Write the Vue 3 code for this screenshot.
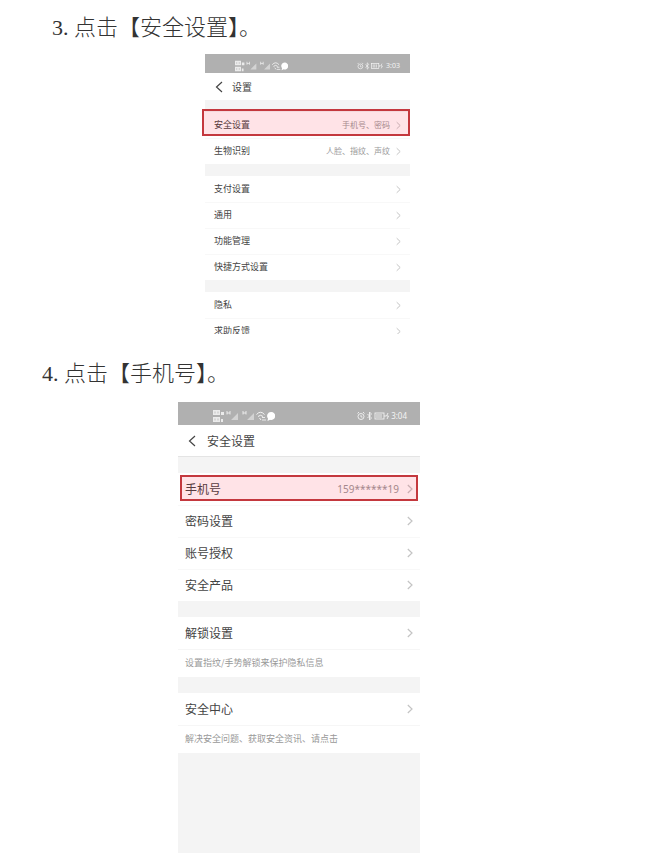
<script setup>
import { h } from 'vue'

const settings = [
  [
    { label: '安全设置', value: '手机号、密码', marked: true },
    { label: '生物识别', value: '人脸、指纹、声纹' },
  ],
  [{ label: '支付设置' }, { label: '通用' }, { label: '功能管理' }, { label: '快捷方式设置' }],
  [{ label: '隐私' }, { label: '求助反馈' }],
]

const security = [
  {
    rows: [
      { label: '手机号', value: '159******19', marked: true },
      { label: '密码设置' },
      { label: '账号授权' },
      { label: '安全产品' },
    ],
  },
  { rows: [{ label: '解锁设置' }], note: '设置指纹/手势解锁来保护隐私信息' },
  { rows: [{ label: '安全中心' }], note: '解决安全问题、获取安全资讯、请点击' },
]

const Chevron = () =>
  h('svg', { class: 'chevron', viewBox: '0 0 6 10', 'aria-hidden': 'true' }, [
    h('path', { d: 'M.8 1 5 5 .8 9', fill: 'none', stroke: 'currentColor', 'stroke-width': 1.2 }),
  ])

const BackIcon = () =>
  h('svg', { class: 'back-icon', viewBox: '0 0 8 12', 'aria-hidden': 'true' }, [
    h('path', { d: 'M7 1 1.5 6 7 11', fill: 'none', stroke: 'currentColor', 'stroke-width': 1.2 }),
  ])

const SignalIcons = () =>
  h('svg', { class: 'signals', viewBox: '0 0 62 14', 'aria-hidden': 'true' }, [
    h('g', { fill: '#fff', opacity: 0.75 }, [
      h('path', { d: 'M0 1h7v5H0zM0 8h7v5H0zM8 3h3v3H8zM8 10h2v3H8z' }),
      h('path', { d: 'M25 4v7h-7zM41 4v7h-7z', opacity: 0.6 }),
    ]),
    h('path', {
      d: 'M2 2.500v2M5 2.500v2M2 9.500v2M5 9.500v2',
      stroke: '#b0b0b0',
      'stroke-width': 0.7,
    }),
    h('path', {
      d: 'M14 2v3.500M17 2v3.500M14 4h3M30 2v3.500M33 2v3.500M30 4h3',
      stroke: '#fff',
      'stroke-width': 0.9,
      opacity: 0.8,
    }),
    h('path', {
      d: 'M43.500 5.500q4-4.500 8 0M45 7.500q2.500-2.500 5 0M46.500 9l1.500 2',
      fill: 'none',
      stroke: '#fff',
      'stroke-width': 1,
      opacity: 0.85,
    }),
    h('path', { d: 'M49 8.500h3M49 11h4', stroke: '#fff', 'stroke-width': 0.9, opacity: 0.85 }),
    h('path', { d: 'M58 3a4 4 0 1 1-1 7.800L54.500 12l.5-2.500A4 4 0 0 1 58 3z', fill: '#fff' }),
  ])

const DeviceIcons = () =>
  h('svg', { class: 'devices', viewBox: '0 0 32 10', 'aria-hidden': 'true' }, [
    h('g', { fill: 'none', stroke: '#fff', 'stroke-width': 0.9, opacity: 0.85 }, [
      h('circle', { cx: 4, cy: 5.5, r: 3 }),
      h('path', { d: 'M4 4v2h1.500M.5 2.500 2 1M7.500 2.500 6 1' }),
      h('path', { d: 'M10.500 3l4 4-2 2V1l2 2-4 4' }),
      h('rect', { x: 18, y: 2, width: 9, height: 6 }),
      h('path', { d: 'M20 3v4M22 3v4M24 3v4M28 4v2M31 2l-1.500 3h2L30 8' }),
    ]),
  ])
</script>

<template>
  <main class="page">
    <section class="step">
      <h2 class="step-title">3. 点击【安全设置】。</h2>
      <div class="phone phone-small">
        <div class="status">
          <SignalIcons />
          <DeviceIcons />
          <span>3:03</span>
        </div>
        <header class="bar">
          <button type="button" class="back" aria-label="返回"><BackIcon /></button>
          <h3>设置</h3>
        </header>
        <div v-for="(group, i) in settings" :key="i" class="group">
          <button
            v-for="row in group"
            :key="row.label"
            type="button"
            class="row"
            :class="{ marked: row.marked }"
          >
            <span class="label">{{ row.label }}</span>
            <span class="value">{{ row.value }}</span>
            <Chevron />
          </button>
        </div>
      </div>
    </section>

    <section class="step step-last">
      <h2 class="step-title">4. 点击【手机号】。</h2>
      <div class="phone phone-large">
        <div class="status">
          <SignalIcons />
          <DeviceIcons />
          <span>3:04</span>
        </div>
        <header class="bar">
          <button type="button" class="back" aria-label="返回"><BackIcon /></button>
          <h3>安全设置</h3>
        </header>
        <div v-for="(group, i) in security" :key="i" class="group">
          <button
            v-for="row in group.rows"
            :key="row.label"
            type="button"
            class="row"
            :class="{ marked: row.marked }"
          >
            <span class="label">{{ row.label }}</span>
            <span class="value">{{ row.value }}</span>
            <Chevron />
          </button>
          <p v-if="group.note" class="note">{{ group.note }}</p>
        </div>
      </div>
    </section>
  </main>
</template>

<style>
body {
  margin: 0;
  background: #fff;
}
</style>

<style scoped>
.page {
  display: flex;
  flex-direction: column;
  min-height: 100vh;
  padding-top: 12px;
  box-sizing: border-box;
  font-family: 'Noto Sans CJK SC', sans-serif;
}

.step {
  display: flex;
  flex-direction: column;
}

.step-last {
  flex: 1;
  padding-top: 24px;
}

.step-title {
  margin: 0 0 0 52px;
  font: 300 22px/32px 'Liberation Serif', 'Noto Sans CJK SC', serif;
  color: #333;
}

.step-last .step-title {
  margin-left: 42px;
}

.phone {
  display: flex;
  flex-direction: column;
  background: #f4f4f4;
  color: #444;
}

.phone-small {
  width: 205px;
  height: 280px;
  margin: 10px 0 0 205px;
  overflow-x: visible;
  overflow-y: clip;
}

.phone-large {
  flex: 1;
  width: 242px;
  margin: 12px 0 0 178px;
}

.status {
  display: flex;
  flex: none;
  align-items: center;
  height: 19px;
  padding: 4px 10px 0 30px;
  box-sizing: border-box;
  background: #b0b0b0;
  color: #f4f4f4;
  font-family: 'Noto Sans', sans-serif;
  font-size: 7px;
  line-height: 10px;
}

.signals {
  width: 53px;
  height: 12px;
}

.devices {
  width: 28px;
  height: 8px;
  margin: 0 2px 0 auto;
}

.bar {
  display: flex;
  flex: none;
  align-items: center;
  height: 27px;
  padding-left: 10px;
  background: #fff;
}

.bar h3 {
  margin: 0;
  font-size: 10px;
  font-weight: 400;
}

.back {
  display: flex;
  margin: 0;
  padding: 0;
  border: 0;
  background: none;
  color: #444;
}

.back-icon {
  width: 8px;
  height: 12px;
  margin-right: 9px;
}

.group {
  flex: none;
  margin-top: 12px;
  background: #fff;
}

.row {
  position: relative;
  display: flex;
  align-items: center;
  width: 100%;
  height: 26px;
  margin: 0;
  padding: 0 9px;
  border: 0;
  background: none;
  color: #444;
  font: 400 9px/12px 'Noto Sans CJK SC', sans-serif;
  text-align: left;
}

.row + .row {
  box-shadow: inset 0 1px #f8f8f8;
}

.value {
  margin-left: auto;
  margin-right: 6px;
  color: #999;
  font-size: 8px;
}

.chevron {
  width: 5px;
  height: 9px;
  color: #c4c4c4;
}

.marked::after {
  content: '';
  position: absolute;
  inset: -3px 0 2px -3px;
  border: 2px solid #c4383e;
  background: rgba(255, 0, 32, 0.11);
}

.phone-large .status {
  height: 23px;
  padding: 4px 13px 0 35px;
  font-size: 8px;
}

.phone-large .signals {
  width: 62px;
  height: 14px;
}

.phone-large .devices {
  width: 32px;
  height: 10px;
}

.phone-large .bar {
  height: 31px;
  border-bottom: 1px solid #e4e4e4;
}

.phone-large .bar h3 {
  font-size: 12px;
}

.phone-large .back-icon {
  margin-right: 11px;
}

.phone-large .group {
  margin-top: 16px;
}

.phone-large .row {
  height: 32px;
  padding: 0 7px;
  font-size: 12px;
  line-height: 16px;
}

.phone-large .value {
  font-family: 'Noto Sans', sans-serif;
  font-size: 10px;
  margin-right: 8px;
}

.phone-large .chevron {
  width: 6px;
  height: 10px;
}

.phone-large .marked::after {
  inset: 2px 2px 4px;
}

.note {
  margin: 0;
  padding: 7px 7px 8px;
  border-top: 1px solid #f6f6f6;
  color: #999;
  font-size: 9px;
  line-height: 12px;
}
</style>
